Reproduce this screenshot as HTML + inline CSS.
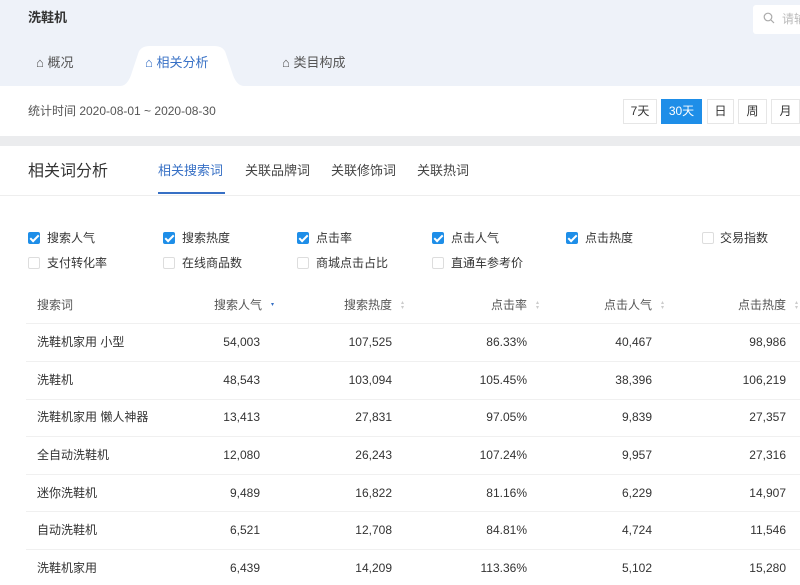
<!DOCTYPE html>
<html><head><meta charset="utf-8"><style>
*{margin:0;padding:0;box-sizing:border-box}
body{width:800px;height:585px;overflow:hidden;background:#fff;font-family:"Liberation Sans","Noto Sans CJK SC",sans-serif;color:#333;font-size:12px;position:relative}
.a{position:absolute;white-space:nowrap;line-height:16px}
.hdr{left:0;top:0;width:800px;height:86px;background:#eef2f9}
.cb{width:12px;height:12px;border-radius:2px;border:1px solid #ddd;background:#fff}
.cb.on{background:#1e8ee8;border-color:#1e8ee8}
.cb.on::after{content:"";position:absolute;left:3px;top:0px;width:3px;height:7px;border:solid #fff;border-width:0 2px 2px 0;transform:rotate(45deg)}
.btn{top:99px;height:25px;border:1px solid #e6e6e6;background:#fff;text-align:center;line-height:23px;font-size:12px;color:#333}
.line{left:26px;width:774px;height:1px;background:#f0f0f0}
.r{text-align:right}
.sort{display:inline-block;width:6px;margin-left:6px;vertical-align:middle;font-size:6px;line-height:5px;color:#ccc}
</style></head><body>
<div class="a hdr"></div>
<div class="a" style="left:28px;top:10px;font-size:13px;font-weight:bold;color:#333">洗鞋机</div>
<div class="a" style="left:753px;top:5px;width:60px;height:29px;background:#fff;border-radius:3px;"></div>
<svg class="a" style="left:763px;top:12px" width="12" height="12"><circle cx="5" cy="5" r="3.8" fill="none" stroke="#aaa" stroke-width="1.2"/><path d="M8 8 L11 11" stroke="#aaa" stroke-width="1.2"/></svg>
<div class="a" style="left:782px;top:11px;font-size:12px;color:#bbb">请输</div>
<svg class="a" style="left:120px;top:46px" width="124" height="40"><path d="M0 40 Q8 40 12 26 L18 8 Q20 0 30 0 L94 0 Q104 0 106 8 L112 26 Q116 40 124 40 Z" fill="#fff"/></svg>
<div class="a" style="left:36px;top:55px;font-size:13px;color:#555">⌂ 概况</div>
<div class="a" style="left:145px;top:55px;font-size:13px;color:#3770c5">⌂ 相关分析</div>
<div class="a" style="left:282px;top:55px;font-size:13px;color:#555">⌂ 类目构成</div>
<div class="a" style="left:28px;top:103px;font-size:12px;color:#555">统计时间 2020-08-01 ~ 2020-08-30</div>
<div class="a btn" style="left:623px;width:34px;line-height:23px">7天</div>
<div class="a btn" style="left:661px;width:41px;background:#1e8ee8;border-color:#1e8ee8;color:#fff;line-height:23px">30天</div>
<div class="a btn" style="left:707px;width:27px;line-height:23px">日</div>
<div class="a btn" style="left:738px;width:29px;line-height:23px">周</div>
<div class="a btn" style="left:771px;width:29px;line-height:23px">月</div>
<div class="a" style="left:0;top:136px;width:800px;height:10px;background:#ebecee"></div>
<div class="a" style="left:28px;top:162px;font-size:16px;line-height:20px;color:#333">相关词分析</div>
<div class="a" style="left:158px;top:163px;font-size:13px;color:#3770c5">相关搜索词</div>
<div class="a" style="left:158px;top:192px;width:67px;height:2px;background:#3770c5"></div>
<div class="a" style="left:245px;top:163px;font-size:13px;color:#444">关联品牌词</div>
<div class="a" style="left:331px;top:163px;font-size:13px;color:#444">关联修饰词</div>
<div class="a" style="left:417px;top:163px;font-size:13px;color:#444">关联热词</div>
<div class="a" style="left:0;top:195px;width:800px;height:1px;background:#eee"></div>

<div class="a cb on" style="left:28px;top:232px"></div><div class="a" style="left:47px;top:230px">搜索人气</div>
<div class="a cb on" style="left:163px;top:232px"></div><div class="a" style="left:182px;top:230px">搜索热度</div>
<div class="a cb on" style="left:297px;top:232px"></div><div class="a" style="left:316px;top:230px">点击率</div>
<div class="a cb on" style="left:432px;top:232px"></div><div class="a" style="left:451px;top:230px">点击人气</div>
<div class="a cb on" style="left:566px;top:232px"></div><div class="a" style="left:585px;top:230px">点击热度</div>
<div class="a cb" style="left:702px;top:232px"></div><div class="a" style="left:720px;top:230px">交易指数</div>
<div class="a cb" style="left:28px;top:257px"></div><div class="a" style="left:47px;top:255px">支付转化率</div>
<div class="a cb" style="left:163px;top:257px"></div><div class="a" style="left:182px;top:255px">在线商品数</div>
<div class="a cb" style="left:297px;top:257px"></div><div class="a" style="left:316px;top:255px">商城点击占比</div>
<div class="a cb" style="left:432px;top:257px"></div><div class="a" style="left:451px;top:255px">直通车参考价</div>

<div class="a" style="left:37px;top:297px;color:#555">搜索词</div>
<div class="a r" style="right:526px;top:297px;color:#555">搜索人气<span class="sort" style="color:#3770c5">▾</span></div>
<div class="a r" style="right:396px;top:297px;color:#555">搜索热度<span class="sort">▴<br>▾</span></div>
<div class="a r" style="right:261px;top:297px;color:#555">点击率<span class="sort">▴<br>▾</span></div>
<div class="a r" style="right:136px;top:297px;color:#555">点击人气<span class="sort">▴<br>▾</span></div>
<div class="a r" style="right:2px;top:297px;color:#555">点击热度<span class="sort">▴<br>▾</span></div>
<div class="a line" style="top:323px"></div>

<div class="a" style="left:37px;top:334px">洗鞋机家用 小型</div><div class="a r" style="right:540px;top:334px">54,003</div><div class="a r" style="right:408px;top:334px">107,525</div><div class="a r" style="right:273px;top:334px">86.33%</div><div class="a r" style="right:148px;top:334px">40,467</div><div class="a r" style="right:14px;top:334px">98,986</div>
<div class="a line" style="top:361px"></div>
<div class="a" style="left:37px;top:372px">洗鞋机</div><div class="a r" style="right:540px;top:372px">48,543</div><div class="a r" style="right:408px;top:372px">103,094</div><div class="a r" style="right:273px;top:372px">105.45%</div><div class="a r" style="right:148px;top:372px">38,396</div><div class="a r" style="right:14px;top:372px">106,219</div>
<div class="a line" style="top:399px"></div>
<div class="a" style="left:37px;top:409px">洗鞋机家用 懒人神器</div><div class="a r" style="right:540px;top:409px">13,413</div><div class="a r" style="right:408px;top:409px">27,831</div><div class="a r" style="right:273px;top:409px">97.05%</div><div class="a r" style="right:148px;top:409px">9,839</div><div class="a r" style="right:14px;top:409px">27,357</div>
<div class="a line" style="top:436px"></div>
<div class="a" style="left:37px;top:447px">全自动洗鞋机</div><div class="a r" style="right:540px;top:447px">12,080</div><div class="a r" style="right:408px;top:447px">26,243</div><div class="a r" style="right:273px;top:447px">107.24%</div><div class="a r" style="right:148px;top:447px">9,957</div><div class="a r" style="right:14px;top:447px">27,316</div>
<div class="a line" style="top:474px"></div>
<div class="a" style="left:37px;top:485px">迷你洗鞋机</div><div class="a r" style="right:540px;top:485px">9,489</div><div class="a r" style="right:408px;top:485px">16,822</div><div class="a r" style="right:273px;top:485px">81.16%</div><div class="a r" style="right:148px;top:485px">6,229</div><div class="a r" style="right:14px;top:485px">14,907</div>
<div class="a line" style="top:511px"></div>
<div class="a" style="left:37px;top:522px">自动洗鞋机</div><div class="a r" style="right:540px;top:522px">6,521</div><div class="a r" style="right:408px;top:522px">12,708</div><div class="a r" style="right:273px;top:522px">84.81%</div><div class="a r" style="right:148px;top:522px">4,724</div><div class="a r" style="right:14px;top:522px">11,546</div>
<div class="a line" style="top:549px"></div>
<div class="a" style="left:37px;top:560px">洗鞋机家用</div><div class="a r" style="right:540px;top:560px">6,439</div><div class="a r" style="right:408px;top:560px">14,209</div><div class="a r" style="right:273px;top:560px">113.36%</div><div class="a r" style="right:148px;top:560px">5,102</div><div class="a r" style="right:14px;top:560px">15,280</div>
</body></html>
